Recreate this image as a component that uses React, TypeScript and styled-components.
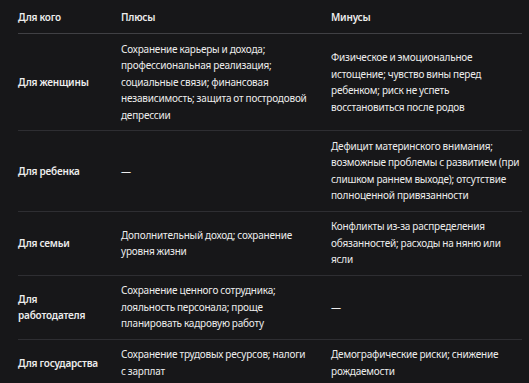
import React from "react";
import styled, { createGlobalStyle } from "styled-components";

const Global = createGlobalStyle`
  html, body { margin: 0; padding: 0; background: #171719; }
  body { font-family: "Noto Sans", "Open Sans", sans-serif; color: #ececec; }
`;

const Page = styled.div`
  width: 529px;
  height: 383px;
  overflow: hidden;
  background: #171719;
  padding: 0 7px 0 18px;
  box-sizing: border-box;
`;

const Table = styled.table`
  width: 504px;
  table-layout: fixed;
  border-collapse: collapse;
  font-size: 10px;
  letter-spacing: -0.2px;
  word-spacing: -0.3px;
  line-height: 16.5px;
`;

const Col = styled.col<{ $w: number }>`
  width: ${(p) => p.$w}px;
`;

const Th = styled.th`
  text-align: left;
  font-weight: 600;
  padding: 8.5px 10.5px 8px;
  border-bottom: 1px solid #404044;
  &:first-child { padding-left: 0; }
  &:last-child { padding-right: 0; }
`;

const Tr = styled.tr`
  border-bottom: 1px solid #2e2e32;
  &:last-child { border-bottom: none; }
`;

const Td = styled.td<{ $head?: boolean }>`
  vertical-align: middle;
  padding: 6.75px 10.5px;
  font-weight: ${(p) => (p.$head ? 600 : 400)};
  &:first-child { padding-left: 0; }
  &:last-child { padding-right: 0; }
`;

const rows: [string, string, string][] = [
  [
    "Для женщины",
    "Сохранение карьеры и дохода; профессиональная реализация; социальные связи; финансовая независимость; защита от постродовой депрессии",
    "Физическое и эмоциональное истощение; чувство вины перед ребенком; риск не успеть восстановиться после родов",
  ],
  [
    "Для ребенка",
    "—",
    "Дефицит материнского внимания; возможные проблемы с развитием (при слишком раннем выходе); отсутствие полноценной привязанности",
  ],
  [
    "Для семьи",
    "Дополнительный доход; сохранение уровня жизни",
    "Конфликты из-за распределения обязанностей; расходы на няню или ясли",
  ],
  [
    "Для работодателя",
    "Сохранение ценного сотрудника; лояльность персонала; проще планировать кадровую работу",
    "—",
  ],
  [
    "Для государства",
    "Сохранение трудовых ресурсов; налоги с зарплат",
    "Демографические риски; снижение рождаемости",
  ],
];

export default function App() {
  return (
    <Page>
      <Global />
      <Table>
        <colgroup>
          <Col $w={92.5} />
          <Col $w={210} />
          <Col $w={201.5} />
        </colgroup>
        <thead>
          <tr>
            <Th>Для кого</Th>
            <Th>Плюсы</Th>
            <Th>Минусы</Th>
          </tr>
        </thead>
        <tbody>
          {rows.map((r) => (
            <Tr key={r[0]}>
              <Td $head>{r[0]}</Td>
              <Td>{r[1]}</Td>
              <Td>{r[2]}</Td>
            </Tr>
          ))}
        </tbody>
      </Table>
    </Page>
  );
}
